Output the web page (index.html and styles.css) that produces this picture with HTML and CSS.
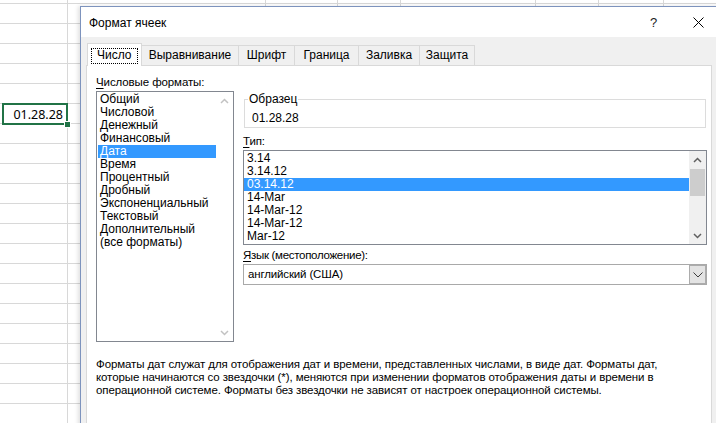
FILE: index.html
```html
<!DOCTYPE html>
<html lang="ru">
<head>
<meta charset="utf-8">
<title>Формат ячеек</title>
<link rel="stylesheet" href="styles.css">
</head>
<body>
<div class="screen">
  <div class="sheet">
    <div class="cell">01.28.28<span class="handle"></span></div>
  </div>
  <div class="dialog">
    <div class="titlebar">
      <span class="title">Формат ячеек</span>
      <span class="cap-btn help">?</span>
      <span class="cap-btn close"><svg width="11" height="11" viewBox="0 0 11 11"><path d="M0.5 0.5 L10.5 10.5 M10.5 0.5 L0.5 10.5" stroke="#000" stroke-width="1" fill="none"/></svg></span>
    </div>
    <div class="body">
      <div class="tabs">
        <div class="tab active"><span class="focus">Число</span></div>
        <div class="tab t-align">Выравнивание</div>
        <div class="tab t-font">Шрифт</div>
        <div class="tab t-border">Граница</div>
        <div class="tab t-fill">Заливка</div>
        <div class="tab t-prot">Защита</div>
      </div>
      <div class="panel">
        <div class="cols">
          <div class="left">
            <div class="label"><u>Ч</u>исловые форматы:</div>
            <div class="listbox cats">
              <div class="items">
                <div class="item">Общий</div>
                <div class="item">Числовой</div>
                <div class="item">Денежный</div>
                <div class="item">Финансовый</div>
                <div class="item sel">Дата</div>
                <div class="item">Время</div>
                <div class="item">Процентный</div>
                <div class="item">Дробный</div>
                <div class="item">Экспоненциальный</div>
                <div class="item">Текстовый</div>
                <div class="item">Дополнительный</div>
                <div class="item">(все форматы)</div>
              </div>
              <div class="vscroll disabled">
                <span class="arrow"><svg width="9" height="6" viewBox="0 0 9 6"><path d="M1 5 L4.5 1.5 L8 5" fill="none" stroke="#c2c2c2" stroke-width="1.5"/></svg></span>
                <span class="track"></span>
                <span class="arrow"><svg width="9" height="6" viewBox="0 0 9 6"><path d="M1 1 L4.5 4.5 L8 1" fill="none" stroke="#c2c2c2" stroke-width="1.5"/></svg></span>
              </div>
            </div>
          </div>
          <div class="right">
            <fieldset class="sample">
              <legend>Образец</legend>
              <div class="sample-value">01.28.28</div>
            </fieldset>
            <div class="label type-label"><u>Т</u>ип:</div>
            <div class="listbox types">
              <div class="items">
                <div class="item">3.14</div>
                <div class="item">3.14.12</div>
                <div class="item sel">03.14.12</div>
                <div class="item">14-Mar</div>
                <div class="item">14-Mar-12</div>
                <div class="item">14-Mar-12</div>
                <div class="item">Mar-12</div>
              </div>
              <div class="vscroll">
                <span class="arrow"><svg width="9" height="6" viewBox="0 0 9 6"><path d="M1 5 L4.5 1.5 L8 5" fill="none" stroke="#606060" stroke-width="1.5"/></svg></span>
                <span class="thumb"></span>
                <span class="track"></span>
                <span class="arrow"><svg width="9" height="6" viewBox="0 0 9 6"><path d="M1 1 L4.5 4.5 L8 1" fill="none" stroke="#606060" stroke-width="1.5"/></svg></span>
              </div>
            </div>
            <div class="label lang-label"><u>Я</u>зык (местоположение):</div>
            <div class="select">
              <span class="select-text">английский (США)</span>
              <span class="select-btn"><svg width="10" height="6" viewBox="0 0 10 6"><path d="M0.5 0.5 L5 5 L9.5 0.5" fill="none" stroke="#3c3c3c" stroke-width="1"/></svg></span>
            </div>
          </div>
        </div>
        <p class="desc">Форматы дат служат для отображения дат и времени, представленных числами, в виде дат. Форматы дат,<br>которые начинаются со звездочки (*), меняются при изменении форматов отображения даты и времени в<br>операционной системе. Форматы без звездочки не зависят от настроек операционной системы.</p>
      </div>
    </div>
  </div>
</div>
</body>
</html>
```

FILE: styles.css
```css
* { box-sizing: border-box; }

html, body {
  margin: 0;
  padding: 0;
}

body {
  width: 716px;
  height: 423px;
  overflow: hidden;
  font-family: "Liberation Sans", Arial, sans-serif;
  font-size: 11.5px;
  color: #000;
  background-color: #fff;
  background-image:
    linear-gradient(to right,
      transparent 0, transparent 67px, #d8d8d8 67px, #d8d8d8 68px,
      transparent 68px, transparent 265px, #d8d8d8 265px, #d8d8d8 266px,
      transparent 266px, transparent 337px, #d8d8d8 337px, #d8d8d8 338px,
      transparent 338px, transparent 400px, #d8d8d8 400px, #d8d8d8 401px,
      transparent 401px, transparent 535px, #d8d8d8 535px, #d8d8d8 536px,
      transparent 536px, transparent 598px, #d8d8d8 598px, #d8d8d8 599px,
      transparent 599px, transparent 663px, #d8d8d8 663px, #d8d8d8 664px,
      transparent 664px),
    linear-gradient(to bottom, #d8d8d8 0, #d8d8d8 1px, transparent 1px);
  background-size: 100% 100%, 100% 20px;
  background-position: 0 0, 0 3px;
  background-repeat: no-repeat, repeat;
}

.screen {
  display: flex;
  align-items: flex-start;
}

/* spreadsheet */
.sheet {
  width: 80px;
  flex: none;
  padding: 103px 0 0 2px;
}

.cell {
  position: relative;
  width: 66px;
  height: 22px;
  border: 2px solid #217346;
  background: #fff;
  text-align: right;
  padding: 1px 3px 0 0;
  font-family: "Noto Sans", "Open Sans", sans-serif;
  font-size: 12.5px;
  line-height: 18px;
}

.handle {
  position: absolute;
  right: -5px;
  bottom: -5px;
  width: 7px;
  height: 7px;
  background: #217346;
  border: 1px solid #fff;
}

/* dialog */
.dialog {
  flex: none;
  width: 642px;
  height: 430px;
  margin-top: 6px;
  border: 1px solid #7d93bd;
  background: #f0f0f0;
  box-shadow: -2px 0 4px rgba(0, 0, 0, 0.12);
  display: flex;
  flex-direction: column;
}

.titlebar {
  height: 30px;
  flex: none;
  background: #fff;
  display: flex;
  align-items: center;
  padding-left: 8px;
}

.title {
  flex: 1;
  font-size: 12px;
  padding-top: 1px;
}

.cap-btn {
  width: 45px;
  height: 30px;
  display: flex;
  align-items: center;
  justify-content: center;
}

.help {
  font-size: 13px;
  color: #222;
  padding-top: 1px;
}

.close svg {
  display: block;
  margin-top: 1px;
}

.body {
  flex: 1;
  padding: 6px 9px 0 5px;
  display: flex;
  flex-direction: column;
}

.tabs {
  display: flex;
  align-items: flex-end;
  padding-left: 1px;
  height: 23px;
  position: relative;
  z-index: 1;
  margin-bottom: -1px;
  font-size: 12px;
}

.tab {
  height: 21px;
  border: 1px solid #d9d9d9;
  border-left: none;
  background: #f0f0f0;
  line-height: 19px;
  text-align: center;
  white-space: nowrap;
}

.t-align { width: 97px; }
.t-font { width: 56px; }
.t-border { width: 64px; }
.t-fill { width: 61px; }
.t-prot { width: 55px; }

.tab.active {
  height: 23px;
  width: 55px;
  border-left: 1px solid #d9d9d9;
  border-bottom: none;
  background: #fff;
  padding: 4px 0 0 3px;
  line-height: 14px;
  text-align: left;
}

.focus {
  display: inline-block;
  border: 1px dotted #000;
  padding: 0 5px 1px 5px;
  line-height: 13px;
}

.panel {
  flex: 1;
  background: #fff;
  border: 1px solid #d9d9d9;
  padding: 9px 5px 0 9px;
}

.cols {
  display: flex;
  gap: 9px;
  align-items: flex-start;
}

.label {
  line-height: 14px;
  height: 14px;
  white-space: nowrap;
  letter-spacing: -0.1px;
}

.label u {
  text-decoration-thickness: 1px;
  text-underline-offset: 2px;
}

.left {
  width: 138px;
  flex: none;
}

.listbox {
  display: flex;
  border: 1px solid #828790;
  background: #fff;
}

.cats {
  margin-top: 2px;
  height: 251px;
}

.items {
  flex: 1;
  padding-top: 1px;
  min-width: 0;
}

.item {
  height: 13px;
  line-height: 13px;
  white-space: nowrap;
  font-size: 12px;
}

.cats .item {
  padding-left: 2px;
  margin-left: 1px;
}

.item.sel {
  background: #3399ff;
  color: #fff;
}

.vscroll {
  width: 17px;
  flex: none;
  display: flex;
  flex-direction: column;
  background: #f0f0f0;
}

.vscroll.disabled {
  background: #fff;
}

.arrow {
  height: 17px;
  flex: none;
  display: flex;
  align-items: center;
  justify-content: center;
}

.arrow svg {
  display: block;
}

.track {
  flex: 1;
}

.thumb {
  height: 27px;
  margin: 1px 1px 0 1px;
  background: #cdcdcd;
  flex: none;
}

.right {
  width: 464px;
  flex: none;
  padding-top: 17px;
}

.sample {
  margin: 0 1px;
  padding: 0 3px 2px 3px;
  border: 1px solid #dcdcdc;
  min-width: 0;
}

.sample legend {
  padding: 0 1px;
  line-height: 14px;
  font-size: 12px;
}

.sample-value {
  padding: 5px 0 0 4px;
  line-height: 14px;
  font-size: 12px;
}

.type-label {
  margin-top: 6px;
}

.types {
  margin-top: 2px;
  height: 95px;
}

.types .item {
  padding-left: 3px;
}

.lang-label {
  margin-top: 3px;
  letter-spacing: -0.3px;
}

.select {
  margin-top: 2px;
  height: 21px;
  border: 1px solid #a9a9a9;
  display: flex;
  align-items: stretch;
  background: #fff;
}

.select-text {
  flex: 1;
  padding-left: 4px;
  line-height: 19px;
  letter-spacing: -0.15px;
}

.select-btn {
  width: 17px;
  flex: none;
  background: #e3e3e3;
  border: 1px solid #acacac;
  display: flex;
  align-items: center;
  justify-content: center;
}

.select-btn svg {
  display: block;
}

.desc {
  margin: 16px 0 0 0;
  line-height: 13px;
  white-space: nowrap;
  letter-spacing: -0.1px;
}
```
